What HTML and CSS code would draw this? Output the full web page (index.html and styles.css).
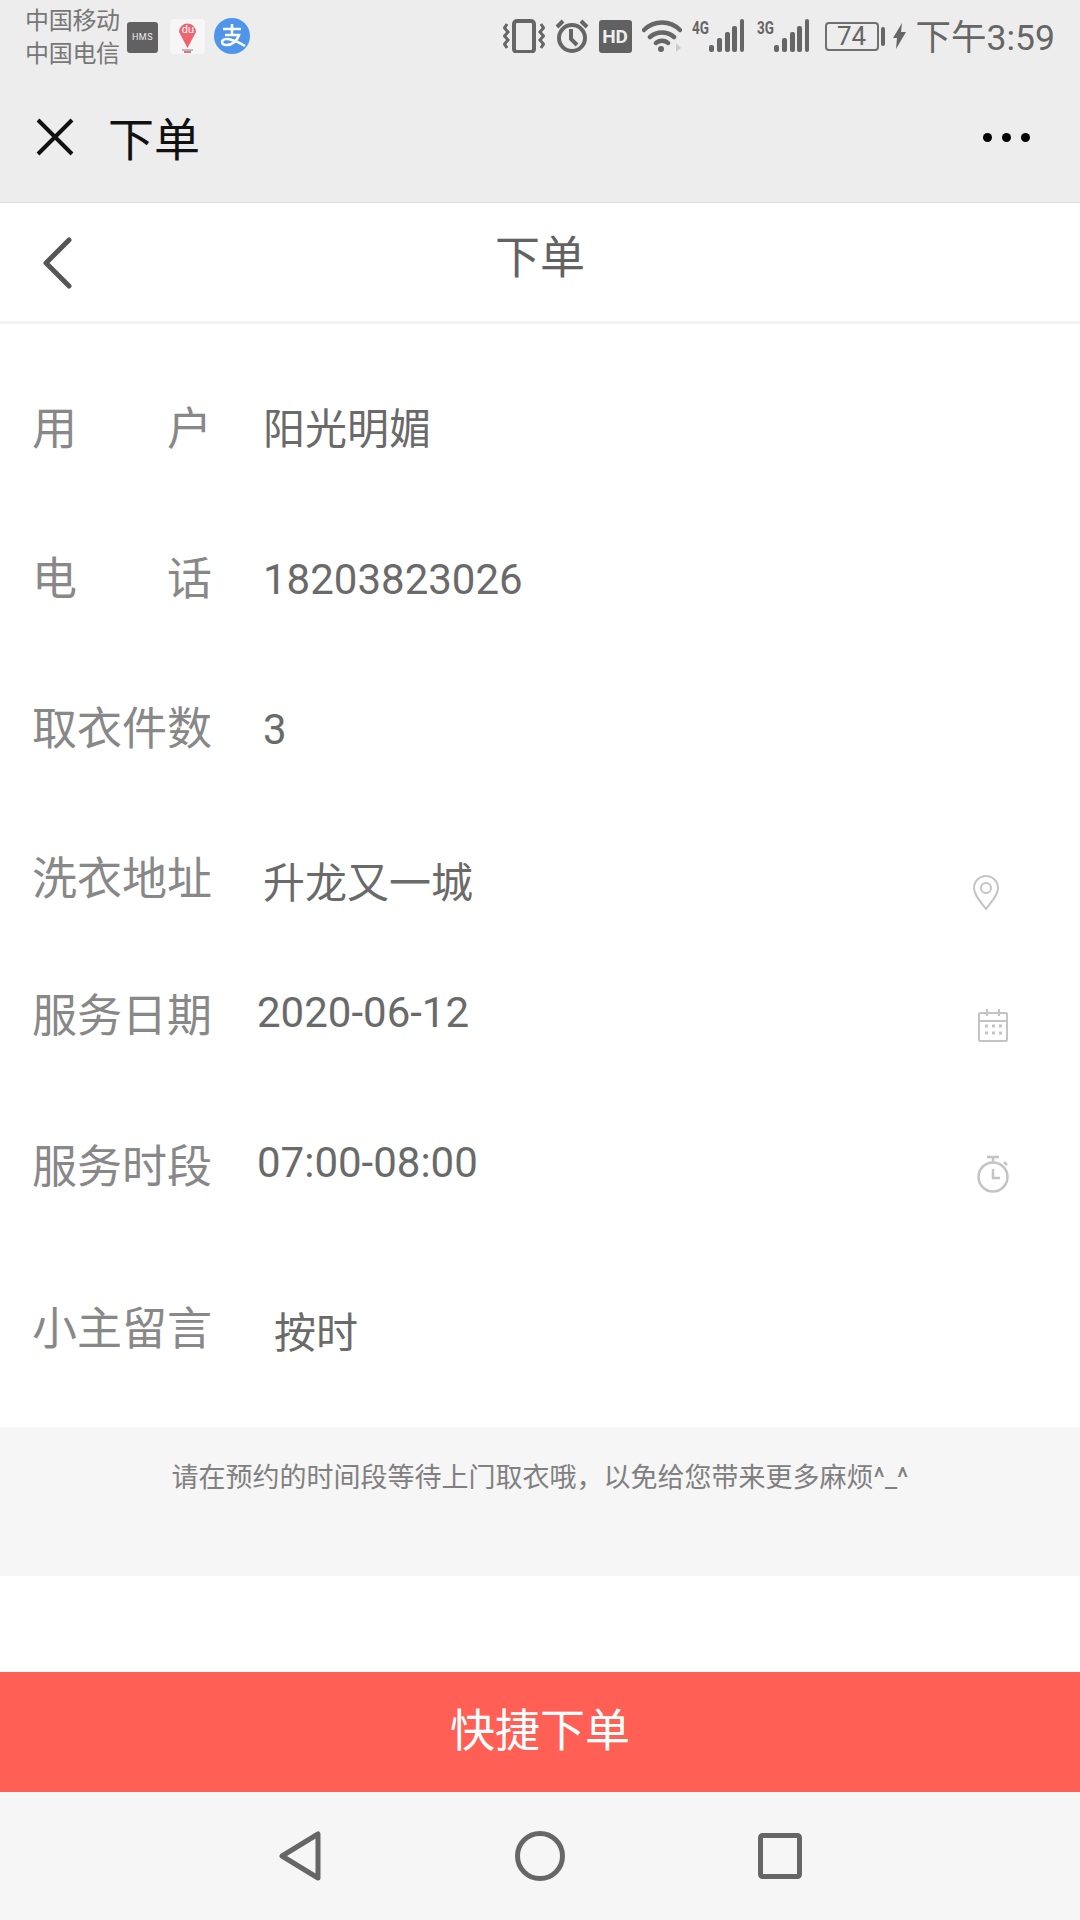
FILE: index.html
```html
<!DOCTYPE html>
<html lang="zh-CN">
<head>
  <title>下单</title>
  <meta charset="utf-8">
  <meta name="viewport" content="width=device-width, initial-scale=1">
  <link rel="stylesheet" href="styles.css">
</head>

<body>
  <div class="status-bar">
    <div class="status-bar__carriers">
      <span>中国移动</span>
      <span>中国电信</span>
    </div>
    <span class="app-icon app-icon_hms">HMS</span>
    <span class="app-icon app-icon_map">
      <svg viewBox="0 0 35 35" width="35" height="35">
        <rect width="35" height="35" rx="4" fill="#f6f6f6"/>
        <path d="M17.500 29 9 13a8.500 8.500 0 1 1 17 0z" fill="#ef6470"/>
        <rect x="12" y="30" width="11" height="2" fill="#b9b7cc"/>
        <rect x="14" y="32" width="7" height="2" fill="#e8726d"/>
      </svg>
      <span class="app-icon__du">du</span>
    </span>
    <svg class="app-icon app-icon_pay" width="36" height="36" viewBox="0 0 36 36">
      <circle cx="18" cy="18" r="18" fill="#4f95ec"/>
      <path d="M9 11h18M18 6v10M11 17h14c-2 6-7 10-12 10-3 0-5-1-5-3 0-3 5-4 10-2 4 1 8 3 13 6" fill="none" stroke="#fff" stroke-width="2.500"/>
    </svg>

    <div class="status-bar__right">
      <svg class="status-icon" width="42" height="34" viewBox="0 0 42 34" fill="none" stroke="#666">
        <rect x="11" y="2" width="20" height="31" rx="3" stroke-width="4"/>
        <path d="M4 5 1.500 9 5 13 1.500 17 5 21 1.500 25 4 29M38 5l2.500 4L37 13l3.500 4L37 21l3.500 4L38 29" stroke-width="3"/>
      </svg>
      <svg class="status-icon" width="34" height="34" viewBox="0 0 34 34" fill="none" stroke="#666" stroke-width="4">
        <circle cx="17" cy="19" r="13"/>
        <path d="M16 10v10l6 6M2 8l6-6M32 8l-6-6"/>
      </svg>
      <span class="status-hd">HD</span>
      <svg class="status-icon" width="40" height="34" viewBox="0 0 40 34" fill="none" stroke="#666" stroke-width="4.500" stroke-linecap="round">
        <path d="M2 11c10-10 26-10 36 0M8 18c7-6 17-6 24 0M14 24c3-3 9-3 12 0"/>
        <circle cx="19" cy="30" r="3" fill="#666" stroke="none"/>
        <path d="m34 24 5 5-5 4z" fill="#ccc" stroke="none"/>
      </svg>
      <span class="signal">
        <span class="signal__type">4G</span>
        <svg width="36" height="34" viewBox="0 0 36 34" fill="#666">
          <rect x="0" y="26" width="5" height="7" rx="2"/>
          <rect x="8" y="19" width="5" height="14" rx="2"/>
          <rect x="16" y="13" width="5" height="20" rx="2"/>
          <rect x="23" y="7" width="5" height="26" rx="2"/>
          <rect x="31" y="0" width="4" height="33" rx="2"/>
        </svg>
      </span>
      <span class="signal signal_second">
        <span class="signal__type">3G</span>
        <svg width="36" height="34" viewBox="0 0 36 34" fill="#666">
          <rect x="0" y="26" width="5" height="7" rx="2"/>
          <rect x="8" y="19" width="5" height="14" rx="2"/>
          <rect x="16" y="13" width="5" height="20" rx="2"/>
          <rect x="23" y="7" width="5" height="26" rx="2"/>
          <rect x="31" y="0" width="4" height="33" rx="2"/>
        </svg>
      </span>
      <span class="battery">74</span>
      <span class="battery-nub"></span>
      <svg class="status-bolt" width="13" height="26" viewBox="0 0 13 26" fill="#666">
        <path d="M9 0 0 15h4L3 26l10-17H8z"/>
      </svg>
      <span class="status-bar__time">下午3:59</span>
    </div>
  </div>

  <div class="top-bar">
    <svg class="top-bar__close" width="38" height="38" viewBox="0 0 38 38" fill="none" stroke="#111" stroke-width="4">
      <path d="M2 2l34 34M36 2 2 36"/>
    </svg>
    <span class="top-bar__title">下单</span>
    <span class="top-bar__more"><i></i><i></i><i></i></span>
  </div>

  <div class="page-head">
    <svg class="page-head__back" width="30" height="52" viewBox="0 0 30 52" fill="none" stroke="#555" stroke-width="5" stroke-linecap="round" stroke-linejoin="round">
      <path d="M27 3 4 26l23 23"/>
    </svg>
    <h1 class="page-head__title">下单</h1>
  </div>

  <div class="order-form">
    <div class="form-row">
      <span class="form-row__label form-row__label_spread"><span>用</span><span>户</span></span>
      <span class="form-row__value">阳光明媚</span>
    </div>
    <div class="form-row">
      <span class="form-row__label form-row__label_spread"><span>电</span><span>话</span></span>
      <span class="form-row__value">18203823026</span>
    </div>
    <div class="form-row">
      <span class="form-row__label">取衣件数</span>
      <span class="form-row__value">3</span>
    </div>
    <div class="form-row">
      <span class="form-row__label">洗衣地址</span>
      <span class="form-row__value form-row__value_low">升龙又一城</span>
      <svg class="form-row__icon form-row__icon_pin" width="28" height="36" viewBox="0 0 28 36" fill="none" stroke="#c4c4c4" stroke-width="2">
        <path d="M14 34C8 26 2 20 2 13a12 12 0 0 1 24 0c0 7-6 13-12 21z"/>
        <circle cx="14" cy="13" r="5"/>
      </svg>
    </div>
    <div class="form-row form-row_date">
      <span class="form-row__label">服务日期</span>
      <span class="form-row__value form-row__value_date">2020-06-12</span>
      <svg class="form-row__icon form-row__icon_date" width="30" height="34" viewBox="0 0 30 34" fill="none" stroke="#c4c4c4" stroke-width="2">
        <rect x="1" y="5" width="28" height="28" rx="1"/>
        <path d="M1 13h28M9 1v7M21 1v7"/>
        <path d="M7 18h3M14 18h3M21 18h3M7 25h3M14 25h3M21 25h3" stroke-width="3"/>
      </svg>
    </div>
    <div class="form-row form-row_time">
      <span class="form-row__label">服务时段</span>
      <span class="form-row__value form-row__value_time">07:00-08:00</span>
      <svg class="form-row__icon form-row__icon_time" width="34" height="38" viewBox="0 0 34 38" fill="none" stroke="#c4c4c4" stroke-width="2.500">
        <circle cx="16" cy="22" r="14.500"/>
        <path d="M16 14v9h7M10 2h12M16 2v5M27 7l3 3"/>
      </svg>
    </div>
    <div class="form-row form-row_note">
      <span class="form-row__label">小主留言</span>
      <span class="form-row__value form-row__value_note">按时</span>
    </div>
  </div>

  <div class="notice">请在预约的时间段等待上门取衣哦，以免给您带来更多麻烦^_^</div>

  <button class="submit-btn" type="button">快捷下单</button>

  <div class="nav-bar">
    <svg width="42" height="50" viewBox="0 0 42 50" fill="none" stroke="#666" stroke-width="5" stroke-linejoin="round">
      <path d="M39 3v44L3 25z"/>
    </svg>
    <svg width="50" height="50" viewBox="0 0 50 50" fill="none" stroke="#666" stroke-width="5">
      <circle cx="25" cy="25" r="22.500"/>
    </svg>
    <svg width="44" height="46" viewBox="0 0 44 46" fill="none" stroke="#666" stroke-width="5" stroke-linejoin="round">
      <rect x="2.500" y="2.500" width="39" height="41" rx="2"/>
    </svg>
  </div>
</body>
</html>
```

FILE: styles.css
```css
*,
*::before,
*::after {
  box-sizing: border-box;
  margin: 0;
  padding: 0;
}

body {
  width: 1080px;
  height: 1920px;
  overflow: hidden;
  color: #666;
  font-family: Roboto, "Noto Sans CJK SC", sans-serif;
  background-color: #fff;
}

/* status bar */

.status-bar {
  display: flex;
  align-items: center;
  height: 72px;
  padding: 0 25px 0 25px;
  background-color: #ededed;
}

.status-bar__carriers {
  display: flex;
  flex-direction: column;
  flex: none;
  width: 102px;
  padding-top: 4px;
  font-size: 24px;
  line-height: 33px;
  letter-spacing: -0.3px;
  color: #777;
}

.app-icon {
  display: flex;
  flex: none;
  justify-content: center;
  align-items: center;
}

.app-icon_hms {
  width: 31px;
  height: 31px;
  margin-top: 2px;
  border-radius: 3px;
  color: #eee;
  font-size: 9px;
  letter-spacing: 0.5px;
  background-color: #616161;
}

.app-icon_map {
  position: relative;
  width: 35px;
  height: 35px;
  margin-left: 12px;
}

.app-icon__du {
  position: absolute;
  top: 5px;
  left: 9px;
  width: 18px;
  color: #fff;
  font-size: 11px;
  line-height: 12px;
  text-align: center;
}

.app-icon_pay {
  margin-left: 9px;
}

.status-bar__right {
  display: flex;
  align-items: center;
  margin-left: auto;
}

.status-icon {
  flex: none;
  margin-right: 10px;
}

.status-hd {
  flex: none;
  width: 33px;
  height: 33px;
  margin-right: 10px;
  border-radius: 3px;
  color: #eee;
  font-size: 19px;
  font-weight: 700;
  line-height: 33px;
  text-align: center;
  background-color: #616161;
}

.signal {
  display: flex;
  align-items: flex-start;
  height: 34px;
  margin-right: 12px;
}

.signal_second {
  margin-right: 15px;
}

.signal svg {
  margin-left: -2px;
}

.signal__type {
  font-size: 18px;
  font-weight: 700;
  line-height: 18px;
  transform: scaleX(0.75);
  transform-origin: left top;
  width: 19px;
}

.battery {
  width: 54px;
  height: 29px;
  border: 2px solid #707070;
  border-radius: 4px;
  font-size: 26px;
  line-height: 25px;
  text-align: center;
}

.battery-nub {
  width: 4px;
  height: 19px;
  margin: 0 8px 0 2px;
  border-radius: 2px;
  background-color: #666;
}

.status-bolt {
  margin-right: 10px;
}

.status-bar__time {
  font-size: 35.5px;
  line-height: 40px;
  padding-top: 4px;
}

/* wechat top bar */

.top-bar {
  display: flex;
  align-items: center;
  height: 131px;
  padding: 0 50px 0 36px;
  border-bottom: 1px solid #dcdcdc;
  background-color: #ededed;
}

.top-bar__title {
  margin-left: 34px;
  padding-bottom: 2px;
  color: #111;
  font-size: 46px;
}

.top-bar__more {
  display: flex;
  gap: 10px;
  margin-left: auto;
}

.top-bar__more i {
  width: 9px;
  height: 9px;
  border-radius: 50%;
  background-color: #000;
}

/* page header */

.page-head {
  display: grid;
  grid-template-columns: 1fr auto 1fr;
  align-items: center;
  height: 121px;
  padding: 0 42px 15px;
  border-bottom: 3px solid #f3f3f3;
}

.page-head__back {
  margin-top: 16px;
}

.page-head__title {
  color: #626262;
  font-size: 45px;
  font-weight: 400;
}

/* form */

.order-form {
  display: flex;
  flex-direction: column;
  height: 1103px;
  padding-top: 31px;
}

.form-row {
  display: flex;
  flex: none;
  align-items: center;
  height: 150px;
  padding: 0 33px;
}

.form-row_date {
  height: 124px;
}

.form-row_time {
  height: 178px;
}

.form-row_note {
  height: 146px;
}

.form-row__label {
  flex: none;
  width: 180px;
  margin-left: -1px;
  color: #888;
  font-size: 45px;
  line-height: 60px;
  white-space: nowrap;
}

.form-row__label_spread {
  display: flex;
  justify-content: space-between;
}

.form-row__value {
  margin-left: 51px;
  color: #6a6a6a;
  font-size: 42px;
  line-height: 56px;
}

.form-row__value_low {
  margin-top: 8px;
}

.form-row__value_date {
  margin-top: -8px;
  margin-left: 45px;
}

.form-row__value_time {
  margin-top: -10px;
  margin-left: 45px;
}

.form-row__value_note {
  margin-top: 8px;
  margin-left: 62px;
}

.form-row__icon {
  flex: none;
  margin-left: auto;
}

.form-row__icon_pin {
  margin-top: 26px;
  margin-right: 47px;
}

.form-row__icon_date {
  margin-top: 16px;
  margin-right: 39px;
}

.form-row__icon_time {
  margin-top: 12px;
  margin-right: 36px;
}

/* bottom */

.notice {
  height: 149px;
  padding-top: 32px;
  color: #808080;
  font-size: 27px;
  line-height: 38px;
  text-align: center;
  background-color: #f6f6f6;
}

.submit-btn {
  display: block;
  width: 100%;
  height: 120px;
  margin-top: 96px;
  padding-bottom: 10px;
  border: none;
  color: #fff;
  font-family: inherit;
  font-size: 45px;
  background-color: #ff5f55;
}

.nav-bar {
  display: flex;
  justify-content: space-between;
  align-items: center;
  height: 128px;
  padding: 0 278px 0 279px;
  background-color: #f6f6f6;
}
```
